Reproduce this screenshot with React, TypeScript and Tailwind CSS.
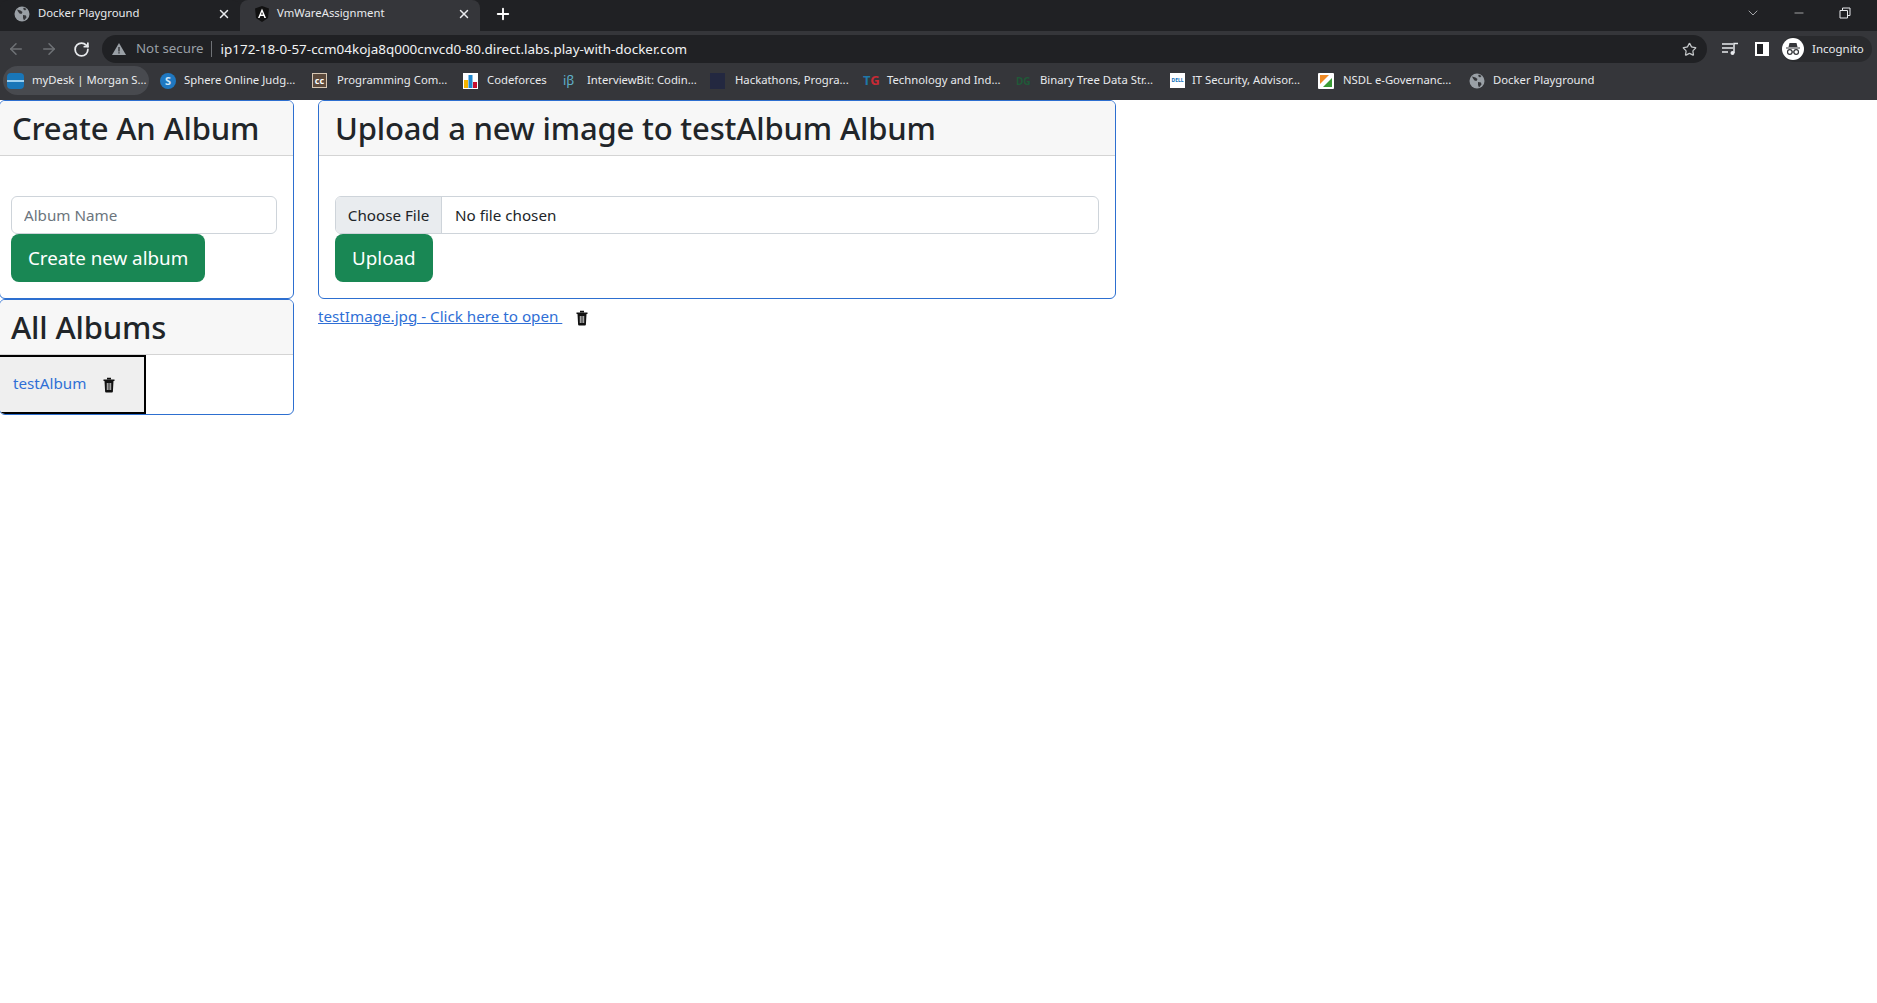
import React from "react";
import { ArrowLeft, ArrowRight, RotateCw, X, Plus, Star, ChevronDown, Minus } from "lucide-react";

const Globe = () => (
  <svg width="16" height="16" viewBox="0 0 16 16" className="shrink-0">
    <circle cx="8" cy="8" r="7.5" fill="#9aa0a6" />
    <path d="M3 3.5l3.5 1 2 1.5-1 2-2-.5-1.5-2zM9 9l3 .5.5 2-2.5 3-1-2.5zM10 1.500l2.500 1.500-1.500 1.500-2-1.500z" fill="#35363a" />
  </svg>
);

const Trash = () => (
  <svg width="14" height="16" viewBox="0 0 14 16" className="shrink-0">
    <path d="M5 1.500h4M1.500 3.200h11" stroke="#111" strokeWidth="1.600" fill="none" />
    <path d="M2.500 4h9l-.6 10.500a1 1 0 0 1-1 1H4.100a1 1 0 0 1-1-1z" fill="#111" />
    <path d="M5.300 6v7M7 6v7M8.700 6v7" stroke="#ddd" strokeWidth="0.900" />
  </svg>
);

const Bookmark = ({ icon, label, className }: { icon: React.ReactNode; label: string; className: string }) => (
  <div className={`flex items-center h-[29px] shrink-0 rounded-full whitespace-nowrap text-[11.3px] text-[#e8eaed] ${className}`}>
    {icon}
    <span>{label}</span>
  </div>
);

const Tab = ({ active, icon, title, className }: { active?: boolean; icon: React.ReactNode; title: string; className: string }) => (
  <div className={`w-[240px] h-[31px] flex items-center pb-[4px] pl-[14px] pr-[9px] rounded-t-[8px] text-[11.3px] text-[#e8eaed] ${active ? "bg-[#35363a]" : "bg-[#202124]"} ${className}`}>
    {icon}
    <span className="flex-1 whitespace-nowrap">{title}</span>
    <X size={14} strokeWidth={2.500} className="text-[#e8eaed]" />
  </div>
);

const Card = ({ title, className, headClass, children }: { title: string; className?: string; headClass: string; children: React.ReactNode }) => (
  <section className={`border border-[#2d6fd0] rounded-[6px] bg-white overflow-hidden ${className ?? ""}`}>
    <h2 className={`h-[55px] pt-[1px] flex items-center bg-[#f7f7f7] border-b border-[#d4d4d4] text-[31px] tracking-[-0.18px] font-medium text-[#212529] leading-none whitespace-nowrap ${headClass}`}>{title}</h2>
    {children}
  </section>
);

const GreenButton = ({ children }: { children: React.ReactNode }) => (
  <button className="block h-[48px] pt-[1px] px-[17px] rounded-[8px] bg-[#198754] text-white text-[18.8px] leading-none">{children}</button>
);

export default function App() {
  return (
    <div className="min-h-[1003px] bg-white font-['Noto_Sans','Open_Sans',sans-serif] text-[#212529] overflow-hidden">
      <header className="h-[100px] bg-[#35363a]">
        <div className="h-[31px] bg-[#202124] flex items-center">
          <Tab className="gap-[8px]" icon={<Globe />} title="Docker Playground" />
          <Tab
            active
            className="gap-[7px]"
            icon={
              <svg width="16" height="16" viewBox="0 0 16 16" className="shrink-0">
                <path d="M8 0L1 2.500l1 9.500 6 4 6-4 1-9.500z" fill="#111" />
                <path d="M8 2.500L4 12h1.600l.8-2h3.200l.8 2H12zM7 8.600l1-2.600 1 2.600z" fill="#fff" />
              </svg>
            }
            title="VmWareAssignment"
          />
          <div className="flex items-center flex-1 pb-[4px]">
            <Plus size={18} strokeWidth={2.500} className="ml-[14px] text-white" />
            <div className="flex-1" />
            <div className="flex items-center pb-[2px]">
              <ChevronDown size={16} strokeWidth={1} className="text-[#e8eaed] mr-[31px]" />
              <Minus size={14} strokeWidth={1} className="text-white mr-[33px]" />
              <svg width="12" height="12" viewBox="0 0 12 12" className="mr-[26px]">
                <path d="M1 3.500h7.500v7.500H1zM3.500 3.500V1H11v7.500H8.500" fill="none" stroke="#e8eaed" />
              </svg>
            </div>
          </div>
        </div>
        <div className="h-[32px] flex items-center pt-[4px] pl-[7px]">
          <ArrowLeft size={18} className="text-[#6f7276]" />
          <ArrowRight size={18} className="ml-[15px] text-[#6f7276]" />
          <RotateCw size={17} strokeWidth={2.500} className="ml-[15px] text-[#e8eaed]" />
          <div className="ml-[12px] w-[1605px] h-[28px] rounded-full bg-[#202124] flex items-center pl-[9px] pr-[10px]">
            <svg width="16" height="14" viewBox="0 0 16 14" className="shrink-0">
              <path d="M8 1l7 12H1z" fill="#9aa0a6" />
              <path d="M7.400 5h1.200v4.500H7.400zM7.400 10.300h1.200v1.200H7.400z" fill="#202124" />
            </svg>
            <span className="ml-[9px] text-[13.3px] text-[#9aa0a6] whitespace-nowrap">Not secure</span>
            <span className="ml-[7px] w-px h-[16px] bg-[#6f7276]" />
            <span className="ml-[9px] text-[13.44px] text-[#f1f3f4] whitespace-nowrap">ip172-18-0-57-ccm04koja8q000cnvcd0-80.direct.labs.play-with-docker.com</span>
            <div className="flex-1" />
            <Star size={15} className="text-[#c4c7c9]" />
          </div>
          <svg width="17" height="14" viewBox="0 0 17 14" className="ml-[15px] shrink-0">
            <path d="M0 2h11M0 6h11M0 10h6" stroke="#e8eaed" strokeWidth="1.500" />
            <path d="M12 11V1.500h4" stroke="#e8eaed" strokeWidth="1.500" fill="none" />
            <circle cx="10.500" cy="11" r="2" fill="#e8eaed" />
          </svg>
          <div className="ml-[16px] w-[14px] h-[14px] border-2 border-white bg-[#202124] flex justify-end shrink-0">
            <div className="w-[4px] h-full bg-white" />
          </div>
          <div className="ml-[13px] w-[90px] h-[26px] rounded-full bg-[#292a2d] flex items-center shrink-0">
            <div className="w-[22px] h-[22px] ml-0 rounded-full bg-white flex items-center justify-center shrink-0">
              <svg width="16" height="14" viewBox="0 0 16 14">
                <path d="M4.500 1h7l1 4h-9zM1 5.500h14v1H1z" fill="#35363a" />
                <circle cx="4.800" cy="10" r="2.300" fill="none" stroke="#35363a" strokeWidth="1.200" />
                <circle cx="11.200" cy="10" r="2.300" fill="none" stroke="#35363a" strokeWidth="1.200" />
                <path d="M7 10h2" stroke="#35363a" strokeWidth="1" />
              </svg>
            </div>
            <span className="ml-[8px] text-[11.5px] text-[#e8eaed]">Incognito</span>
          </div>
        </div>
        <div className="h-[37px] flex items-start pt-[3px] pl-[3px]">
          <Bookmark
            className="w-[146px] bg-[#484a4f] pl-[4px] gap-[8px] mr-[11px]"
            icon={<span className="w-[17px] h-[16px] rounded-[4px] bg-[#1976b8] shrink-0 flex items-center"><span className="w-full h-[2px] bg-[#9cd0f0]" /></span>}
            label="myDesk | Morgan S..."
          />
          <Bookmark
            className="w-[152px] gap-[8px]"
            icon={<span className="w-[16px] h-[16px] rounded-full bg-[#1f78c1] shrink-0 text-[11px] font-bold leading-[16px] text-center text-[#cfe6f7]">S</span>}
            label="Sphere Online Judg..."
          />
          <Bookmark
            className="w-[151px] gap-[10px]"
            icon={<span className="w-[15px] h-[15px] bg-[#5c4a3c] border border-[#d6c6b2] shrink-0 text-[9px] font-bold leading-[13px] text-center text-white">cc</span>}
            label="Programming Com..."
          />
          <Bookmark
            className="w-[100px] gap-[9px]"
            icon={
              <svg width="15" height="16" viewBox="0 0 15 16" className="shrink-0">
                <rect width="15" height="16" fill="#fff" />
                <rect x="1" y="7" width="4" height="8" fill="#f5b400" />
                <rect x="5.500" y="2" width="4" height="13" fill="#1f88d0" />
                <rect x="10" y="9" width="4" height="6" fill="#c8102e" />
              </svg>
            }
            label="Codeforces"
          />
          <Bookmark
            className="w-[147px] gap-[8px]"
            icon={<span className="w-[16px] shrink-0 text-[13px] leading-none text-[#5fb0c8]">iβ</span>}
            label="InterviewBit: Codin..."
          />
          <Bookmark
            className="w-[153px] gap-[10px]"
            icon={<span className="w-[15px] h-[16px] bg-[#232840] shrink-0" />}
            label="Hackathons, Progra..."
          />
          <Bookmark
            className="w-[153px] gap-[8px]"
            icon={<span className="w-[16px] shrink-0 text-[13px] font-bold leading-none"><span className="text-[#1f78a8]">T</span><span className="text-[#c92a35]">G</span></span>}
            label="Technology and Ind..."
          />
          <Bookmark
            className="w-[154px] gap-[8px]"
            icon={<span className="w-[16px] shrink-0 text-[10px] font-bold leading-none text-[#1f5a38]">DG</span>}
            label="Binary Tree Data Str..."
          />
          <Bookmark
            className="w-[148px] gap-[7px]"
            icon={<span className="w-[15px] h-[15px] bg-white shrink-0 text-[5px] font-bold leading-[14px] text-center text-[#0b6fb8]">DELL</span>}
            label="IT Security, Advisor..."
          />
          <Bookmark
            className="w-[151px] gap-[9px]"
            icon={
              <svg width="16" height="16" viewBox="0 0 16 16" className="shrink-0">
                <rect width="16" height="16" rx="1" fill="#fff" />
                <path d="M2 2h9L2 11z" fill="#f08a24" />
                <path d="M14 5v9H5z" fill="#3a9c35" />
              </svg>
            }
            label="NSDL e-Governanc..."
          />
          <Bookmark className="gap-[8px]" icon={<Globe />} label="Docker Playground" />
        </div>
      </header>

      <main className="flex items-start gap-6 -ml-px">
        <div className="w-[295px] shrink-0">
          <Card title="Create An Album" headClass="px-[12px]" className="h-[199px]">
            <div className="px-[11px] pt-[40px]">
              <input
                placeholder="Album Name"
                className="block w-[266px] h-[38px] px-3 border border-[#ced4da] rounded-[6px] text-[15.2px] placeholder:text-[#6c757d]"
              />
              <GreenButton>Create new album</GreenButton>
            </div>
          </Card>
          <Card title="All Albums" headClass="px-[11px]" className="h-[116px]">
            <div className="-ml-[2px] w-[148px] h-[59px] bg-[#efefef] border-2 border-black flex items-center pl-[13px] gap-[16px] text-[15.2px]">
              <a className="text-[#2f6fd6] mb-[3px]">testAlbum</a>
              <Trash />
            </div>
          </Card>
        </div>
        <div className="w-[798px] shrink-0">
          <Card title="Upload a new image to testAlbum Album" headClass="px-4" className="h-[199px]">
            <div className="px-4 pt-[40px]">
              <div className="flex h-[38px] w-[764px] border border-[#ced4da] rounded-[6px] overflow-hidden text-[15.2px]">
                <span className="w-[106px] bg-[#e9ecef] border-r border-[#ced4da] flex items-center justify-center">Choose File</span>
                <span className="flex items-center pl-[13px]">No file chosen</span>
              </div>
              <GreenButton>Upload</GreenButton>
            </div>
          </Card>
          <div className="flex items-center h-[37px] text-[15.2px]">
            <a className="underline text-[#2f6fd6] whitespace-pre mb-[3px]">testImage.jpg - Click here to open </a>
            <span className="ml-[13px]"><Trash /></span>
          </div>
        </div>
      </main>
    </div>
  );
}
